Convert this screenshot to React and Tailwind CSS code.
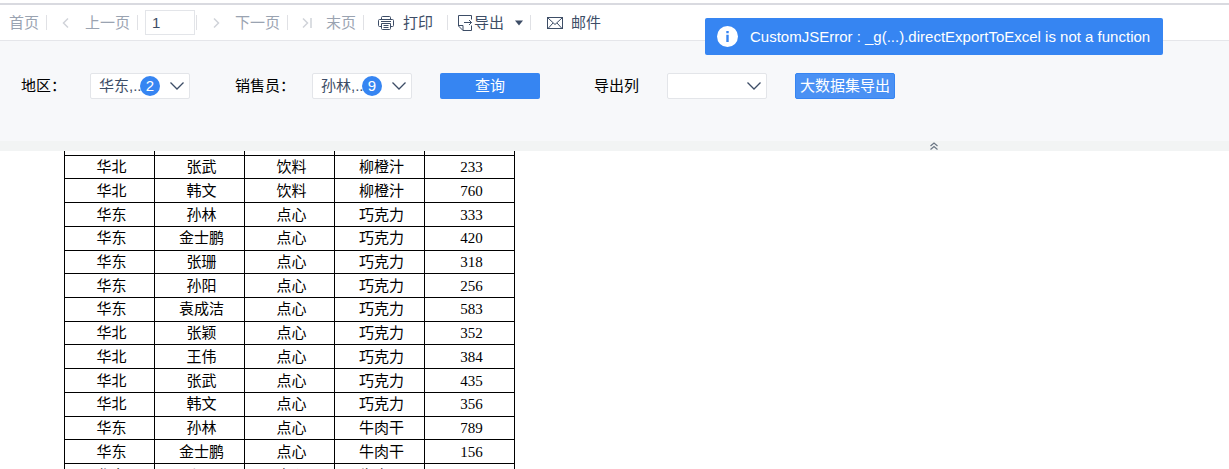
import { useState } from 'react';

const ROWS = [
  ['', '', '', '', ''],
  ['华北', '张武', '饮料', '柳橙汁', 233],
  ['华北', '韩文', '饮料', '柳橙汁', 760],
  ['华东', '孙林', '点心', '巧克力', 333],
  ['华东', '金士鹏', '点心', '巧克力', 420],
  ['华东', '张珊', '点心', '巧克力', 318],
  ['华东', '孙阳', '点心', '巧克力', 256],
  ['华东', '袁成洁', '点心', '巧克力', 583],
  ['华北', '张颖', '点心', '巧克力', 352],
  ['华北', '王伟', '点心', '巧克力', 384],
  ['华北', '张武', '点心', '巧克力', 435],
  ['华北', '韩文', '点心', '巧克力', 356],
  ['华东', '孙林', '点心', '牛肉干', 789],
  ['华东', '金士鹏', '点心', '牛肉干', 156],
  ['华东', '张珊', '点心', '牛肉干', 275],
];

const Separator = () => <span className="h-[15px] w-px shrink-0 bg-[#e0e1e5]" />;

function PageIcon({ d }) {
  return (
    <svg className="h-3 w-[10px] shrink-0" viewBox="0 0 10 12" fill="none" stroke="#d0d3d9" strokeWidth="1.5">
      <path d={d} />
    </svg>
  );
}

function PageButton({ icon, children }) {
  return (
    <button type="button" disabled className="flex shrink-0 items-center gap-[14px] pl-[14px] pr-[7px] text-[#9aa3b1]">
      <PageIcon d={icon} />
      {children}
    </button>
  );
}

function PrintIcon() {
  return (
    <svg className="h-4 w-4" viewBox="0 0 16 16" fill="none" stroke="currentColor">
      <path d="M3.5 4.500V2.500q0-1 1-1h7q1 0 1 1v2M3.5 11.500h-2q-1 0-1-1v-5q0-1 1-1h13q1 0 1 1v5q0 1-1 1h-2" />
      <path d="M3.500 8.500h9v5q0 1-1 1h-7q-1 0-1-1zM3 6.500h10M5.500 10.500h5M5.500 12.500h5" />
    </svg>
  );
}

function ExportIcon() {
  return (
    <svg className="h-4 w-4" viewBox="0 0 16 16" fill="none" stroke="currentColor">
      <path d="M13.500 4.500v-4H.5V11L5 15.500h8.500v-5M.5 10.500H5v5" />
      <path d="M6 7.500h7.500M11 5l2.500 2.500L11 10" />
    </svg>
  );
}

function MailIcon() {
  return (
    <svg className="h-4 w-4" viewBox="0 0 16 16" fill="none" stroke="currentColor">
      <rect x=".5" y="2.500" width="15" height="11" />
      <path d="M1 3l7 6.500L15 3M1 13.500l5-5.500M15 13.500l-5-5.500" />
    </svg>
  );
}

function FilterSelect({ id, options, count }) {
  return (
    <div className="relative w-[100px] shrink-0">
      <select id={id} className="h-[26px] w-full appearance-none rounded-xs border border-[#e3e5e9] bg-white pl-2 text-[#3d4d66] outline-none">
        {options.map(o => <option key={o}>{o}</option>)}
      </select>
      {count && (
        <span className="absolute left-[50px] top-[3px] flex h-5 w-5 items-center justify-center rounded-full bg-[#3685f2] text-white">
          {count}
        </span>
      )}
      <svg className="pointer-events-none absolute right-[6px] top-2 h-[10px] w-[14px]" viewBox="0 0 14 10" fill="none" stroke="#3d4d66" strokeWidth="1.3">
        <path d="M.5 1.500L7 8l6.500-6.500" />
      </svg>
    </div>
  );
}

export default function App() {
  const [page, setPage] = useState('1');

  return (
    <div className="relative flex h-screen flex-col overflow-hidden bg-white font-['Liberation_Sans','Noto_Sans_CJK_SC',sans-serif] text-[15px] leading-5">
      <header className="mt-[3px] flex h-[38px] shrink-0 items-center border-b border-t-2 border-b-[#e5e6ea] border-t-[#d9dae0] pl-[9px] text-[#3d4d66]">
        <button type="button" disabled className="shrink-0 pr-[7px] text-[#9aa3b1]">首页</button>
        <Separator />
        <PageButton icon="M7 1.500L2.500 6L7 10.500">上一页</PageButton>
        <Separator />
        <input aria-label="页码" value={page} onChange={(e) => setPage(e.target.value)}
          className="ml-[7px] mr-px h-[25px] w-[50px] border border-[#e3e5e9] bg-white px-[6px] outline-none" />
        <Separator />
        <PageButton icon="M3 1.500L7.500 6L3 10.500">下一页</PageButton>
        <Separator />
        <PageButton icon="M1 1.500L5.500 6L1 10.500M9 1v10">末页</PageButton>
        <Separator />
        <button type="button" className="flex shrink-0 items-center gap-[9px] px-[14px]"><PrintIcon />打印</button>
        <Separator />
        <button type="button" className="flex shrink-0 items-center pl-[10px] pr-[7px]">
          <ExportIcon />
          <span className="pr-[11px]">导出</span>
          <svg className="h-[6px] w-2" viewBox="0 0 8 6" fill="currentColor"><path d="M0 .5h8L4 5.500z" /></svg>
        </button>
        <Separator />
        <button type="button" className="flex shrink-0 items-center gap-2 pl-4"><MailIcon />邮件</button>
      </header>

      <form onSubmit={(e) => e.preventDefault()} className="flex h-[100px] shrink-0 items-start bg-[#f7f8fa] pl-[21px] pt-8 text-black">
        <label htmlFor="region" className="w-[69px] shrink-0 leading-[26px]">地区：</label>
        <FilterSelect id="region" options={['华东,...']} count={2} />
        <label htmlFor="seller" className="ml-[45px] w-[77px] shrink-0 leading-[26px]">销售员：</label>
        <FilterSelect id="seller" options={['孙林,...']} count={9} />
        <button type="submit" className="ml-7 h-[26px] w-[100px] shrink-0 rounded-xs bg-[#3685f2] text-white">查询</button>
        <label htmlFor="columns" className="ml-[54px] w-[73px] shrink-0 leading-[26px]">导出列</label>
        <FilterSelect id="columns" options={['']} />
        <button type="button" className="ml-7 h-[26px] w-[100px] shrink-0 whitespace-nowrap rounded-xs border border-[#3685f2] bg-[#4a91f4] text-white">大数据集导出</button>
      </form>

      <div className="flex h-[10px] shrink-0 items-center justify-end bg-[#f2f4f4] pr-[291px]">
        <button type="button" aria-label="收起">
          <svg className="block h-2 w-2" viewBox="0 0 8 8" fill="none" stroke="#6b7684" strokeWidth="1.2">
            <path d="M.5 4L4 1l3.500 3M.5 7.500L4 4.500l3.500 3" />
          </svg>
        </button>
      </div>

      <main className="min-h-0 flex-1 overflow-hidden pl-16">
        <table className="-mt-5 h-[357px] w-[451px] table-fixed border-collapse text-center text-black">
          <tbody>
            {ROWS.map((row, i) => (
              <tr key={i} className="h-[23px]">
                {row.map((cell, j) => (
                  <td key={j} className="border border-black p-0 pl-1 leading-5 last:font-['Liberation_Serif',serif]">{cell}</td>
                ))}
              </tr>
            ))}
          </tbody>
        </table>
      </main>

      <div role="alert" className="absolute right-[66px] top-[18px] flex h-[37px] w-[458px] items-center gap-3 rounded-xs bg-[#3685f2] pl-3 text-white">
        <svg className="h-[21px] w-[21px] shrink-0" viewBox="0 0 21 21">
          <circle cx="10.500" cy="10.500" r="10.500" fill="#fff" />
          <path d="M9.300 5h2.400v2.200H9.300zM9.300 8.700h2.400V16H9.300z" fill="#3685f2" />
        </svg>
        <span className="whitespace-nowrap">CustomJSError : _g(...).directExportToExcel is not a function</span>
      </div>
    </div>
  );
}
